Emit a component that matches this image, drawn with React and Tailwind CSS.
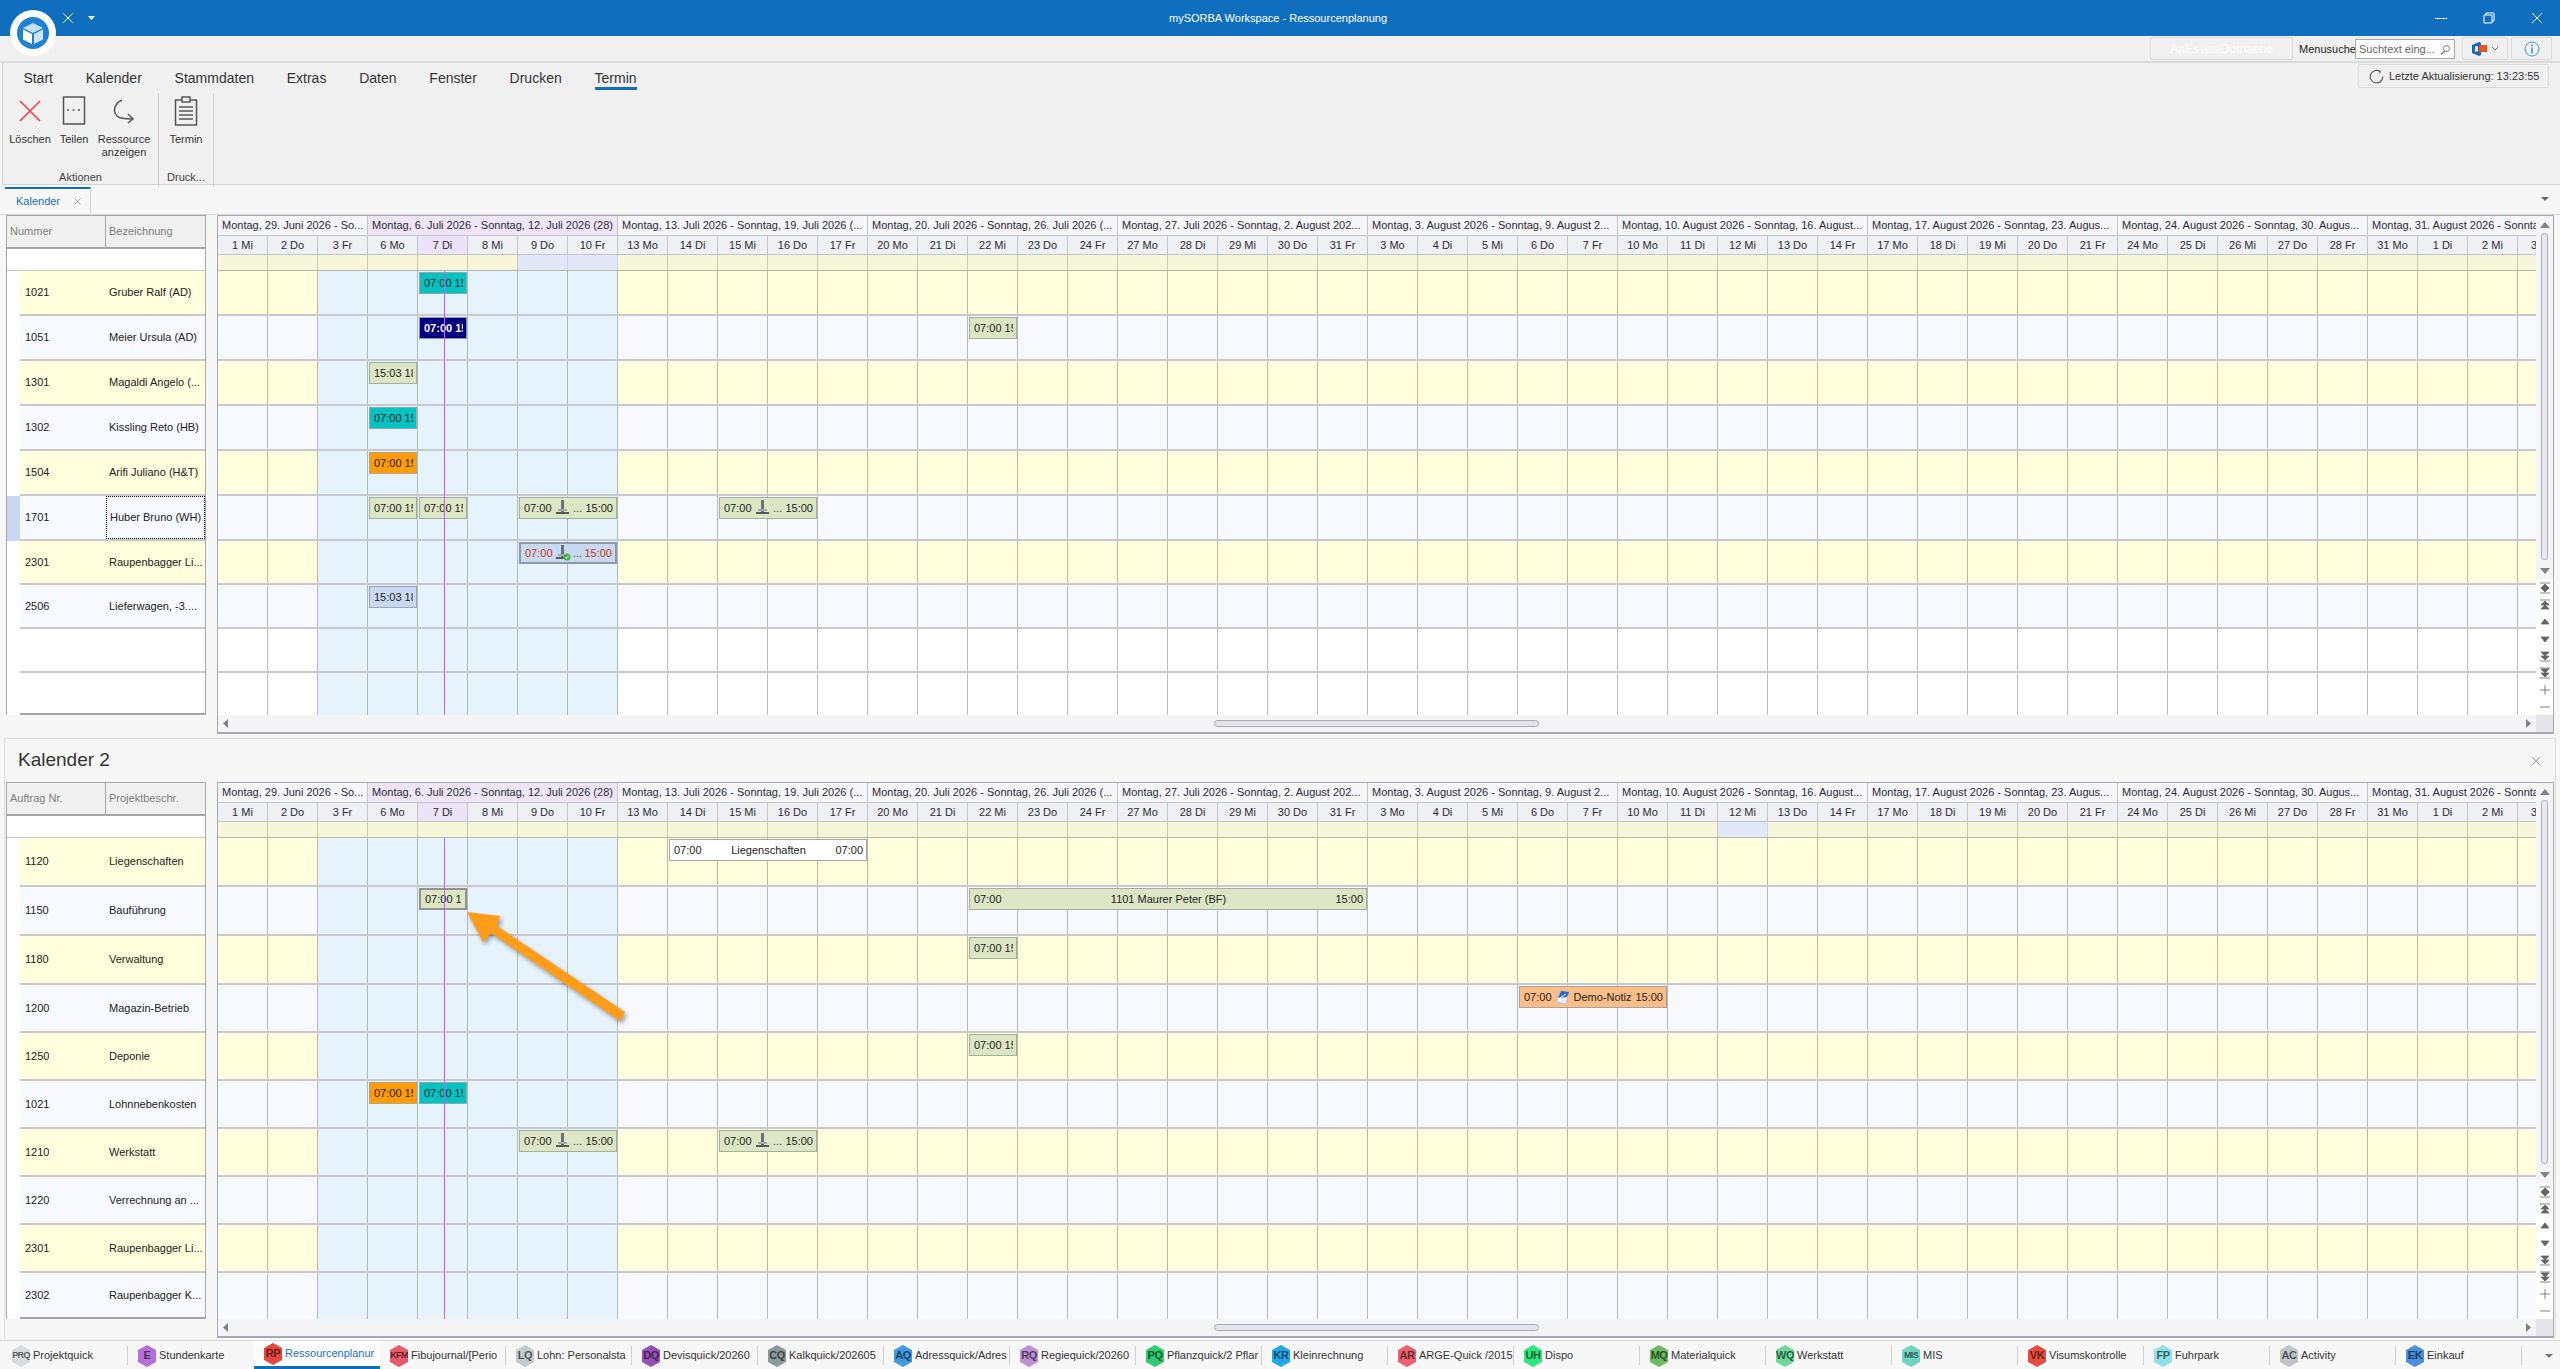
import React from 'react';

const days = ['1 Mi','2 Do','3 Fr','6 Mo','7 Di','8 Mi','9 Do','10 Fr','13 Mo','14 Di','15 Mi','16 Do','17 Fr','20 Mo','21 Di','22 Mi','23 Do','24 Fr','27 Mo','28 Di','29 Mi','30 Do','31 Fr','3 Mo','4 Di','5 Mi','6 Do','7 Fr','10 Mo','11 Di','12 Mi','13 Do','14 Fr','17 Mo','18 Di','19 Mi','20 Do','21 Fr','24 Mo','25 Di','26 Mi','27 Do','28 Fr','31 Mo','1 Di','2 Mi','3 Do'];

const weeks = [
  { n: 3, label: 'Montag, 29. Juni 2026 - So...' },
  { n: 5, label: 'Montag, 6. Juli 2026 - Sonntag, 12. Juli 2026 (28)', now: true },
  { n: 5, label: 'Montag, 13. Juli 2026 - Sonntag, 19. Juli 2026 (...' },
  { n: 5, label: 'Montag, 20. Juli 2026 - Sonntag, 26. Juli 2026 (...' },
  { n: 5, label: 'Montag, 27. Juli 2026 - Sonntag, 2. August 202...' },
  { n: 5, label: 'Montag, 3. August 2026 - Sonntag, 9. August 2...' },
  { n: 5, label: 'Montag, 10. August 2026 - Sonntag, 16. August...' },
  { n: 5, label: 'Montag, 17. August 2026 - Sonntag, 23. Augus...' },
  { n: 5, label: 'Montag, 24. August 2026 - Sonntag, 30. Augus...' },
  { n: 4, label: 'Montag, 31. August 2026 - Sonnta' },
];

const tabs = [
  ['PRQ', 'Projektquick', '#d9dde0'],
  ['E', 'Stundenkarte', '#b56fd8'],
  ['RP', 'Ressourcenplanur', '#e8453c'],
  ['KFM', 'Fibujournal/[Perio', '#e85a6a'],
  ['LQ', 'Lohn: Personalsta', '#c3cacd'],
  ['DQ', 'Devisquick/20260', '#9450b5'],
  ['CQ', 'Kalkquick/202605', '#8b9a9b'],
  ['AQ', 'Adressquick/Adres', '#3f9ade'],
  ['RQ', 'Regiequick/20260', '#bd8fd6'],
  ['PQ', 'Pflanzquick/2 Pflar', '#2ecc71'],
  ['KR', 'Kleinrechnung', '#1fa8ea'],
  ['AR', 'ARGE-Quick /2015', '#ec6070'],
  ['UH', 'Dispo', '#2ee67f'],
  ['MQ', 'Materialquick', '#6cbb5f'],
  ['WQ', 'Werkstatt', '#6dd99e'],
  ['MIS', 'MIS', '#6dd5c0'],
  ['VK', 'Visumskontrolle', '#e74c3c'],
  ['FP', 'Fuhrpark', '#90e0ea'],
  ['AC', 'Activity', '#c0c4c8'],
  ['EK', 'Einkauf', '#4a8fdc'],
];

const eventStyles = {
  green: 'bg-[#dce6c4] border border-[#a6ae9c] text-[#222]',
  greenSel: 'bg-[#dce6c4] border-2 border-[#8f958a] text-[#222]',
  teal: 'bg-[#00c4c4] border border-[#8fa8a8] text-[#222]',
  navy: 'bg-[#000080] border border-[#8f95b0] text-white font-bold',
  orange: 'bg-[#ff9c00] border border-[#b0a58f] text-[#222]',
  blue: 'bg-[#c9d9f1] border border-[#9aa6b8] text-[#222]',
  blueSel: 'bg-[#c9d9f1] border-2 border-[#8f99ac] text-[#c23a10]',
  white: 'bg-white border border-[#a8a8a8] text-[#222]',
  note: 'bg-[#fdbd86] border border-[#a8a29c] text-[#222]',
};

const topRows = [
  { h: 45, no: '1021', name: 'Gruber Ralf (AD)', tone: 'y', events: [{ col: 4, kind: 'teal', text: '07:00 15:00' }] },
  { h: 45, no: '1051', name: 'Meier Ursula (AD)', tone: 'w', events: [{ col: 4, kind: 'navy', text: '07:00 15:00' }, { col: 15, kind: 'green', text: '07:00 15:00' }] },
  { h: 45, no: '1301', name: 'Magaldi Angelo (...', tone: 'y', events: [{ col: 3, kind: 'green', text: '15:03 18:00' }] },
  { h: 45, no: '1302', name: 'Kissling Reto (HB)', tone: 'w', events: [{ col: 3, kind: 'teal', text: '07:00 15:00' }] },
  { h: 45, no: '1504', name: 'Arifi Juliano (H&T)', tone: 'y', events: [{ col: 3, kind: 'orange', text: '07:00 15:00' }] },
  { h: 45, no: '1701', name: 'Huber Bruno (WH)', tone: 'w', selected: true, events: [{ col: 3, kind: 'green', text: '07:00 15:00' }, { col: 4, kind: 'green', text: '07:00 15:00' }, { col: 6, span: 2, kind: 'green', tool: true }, { col: 10, span: 2, kind: 'green', tool: true }] },
  { h: 44, no: '2301', name: 'Raupenbagger Li...', tone: 'y', events: [{ col: 6, span: 2, kind: 'blueSel', tool: true, check: true }] },
  { h: 44, no: '2506', name: 'Lieferwagen, -3....', tone: 'w', events: [{ col: 3, kind: 'blue', text: '15:03 18:00' }] },
  { h: 44, no: '', name: '', tone: 'e', events: [] },
  { h: 42, no: '', name: '', tone: 'e', last: true, events: [] },
];

const bottomRows = [
  { h: 49, no: '1120', name: 'Liegenschaften', tone: 'y', events: [{ col: 9, span: 4, kind: 'white', left: '07:00', mid: 'Liegenschaften', right: '07:00' }] },
  { h: 49, no: '1150', name: 'Bauführung', tone: 'w', events: [{ col: 4, kind: 'greenSel', text: '07:00 15:00' }, { col: 15, span: 8, kind: 'green', left: '07:00', mid: '1101 Maurer Peter (BF)', right: '15:00' }] },
  { h: 49, no: '1180', name: 'Verwaltung', tone: 'y', events: [{ col: 15, kind: 'green', text: '07:00 15:00' }] },
  { h: 48, no: '1200', name: 'Magazin-Betrieb', tone: 'w', events: [{ col: 26, span: 3, kind: 'note', left: '07:00', note: true, mid: 'Demo-Notiz', right: '15:00' }] },
  { h: 48, no: '1250', name: 'Deponie', tone: 'y', events: [{ col: 15, kind: 'green', text: '07:00 15:00' }] },
  { h: 48, no: '1021', name: 'Lohnnebenkosten', tone: 'w', events: [{ col: 3, kind: 'orange', text: '07:00 15:00' }, { col: 4, kind: 'teal', text: '07:00 15:00' }] },
  { h: 48, no: '1210', name: 'Werkstatt', tone: 'y', events: [{ col: 6, span: 2, kind: 'green', tool: true }, { col: 10, span: 2, kind: 'green', tool: true }] },
  { h: 48, no: '1220', name: 'Verrechnung an ...', tone: 'w', events: [] },
  { h: 48, no: '2301', name: 'Raupenbagger Li...', tone: 'y', events: [] },
  { h: 46, no: '2302', name: 'Raupenbagger K...', tone: 'w', last: true, events: [] },
];

const ToolIcon = ({ check }) => (
  <svg width="16" height="16" viewBox="0 0 16 16" className="shrink-0">
    <rect x="6" y="0" width="3" height="12" fill="#6d7074" />
    <rect x="3" y="9" width="9" height="2" fill="#a5a8aa" />
    <rect x="1" y="12" width="13" height="2" fill="#55585c" />
    {check && <circle cx="12" cy="12" r="3.5" fill="#3fb54a" />}
    {check && <path d="M10.3 12l1.3 1.3 2.2-2.4" stroke="#fff" strokeWidth="1" fill="none" />}
  </svg>
);

const NoteIcon = () => (
  <svg width="15" height="16" viewBox="0 0 15 16" className="shrink-0">
    <path d="M1 13L5 2l9 1-3 12z" fill="#e6eef7" stroke="#9fb2c9" strokeWidth="0.6" />
    <path d="M3 9l3-7 8 1-2 5z" fill="#2268c8" />
    <path d="M3 10l8-5" stroke="#fff" strokeWidth="1" />
  </svg>
);

const Event = ({ ev }) => {
  const span = ev.span || 1;
  return (
    <div
      className={`absolute top-px h-[22px] z-10 overflow-hidden flex items-center pl-[4px] pr-[3px] whitespace-nowrap ${eventStyles[ev.kind]}`}
      style={{ left: ev.col * 50 + 1, width: span * 50 - 2 }}
    >
      {ev.text && <span className="overflow-hidden">{ev.text}</span>}
      {ev.tool && (
        <div className="flex w-full items-center justify-between">
          <span>07:00</span>
          <span className="flex items-center gap-[2px] text-[#444]"><ToolIcon check={ev.check} />...</span>
          <span>15:00</span>
        </div>
      )}
      {ev.mid && (
        <div className="flex w-full items-center justify-between">
          <span>{ev.left}</span>
          <span className="flex items-center gap-[3px]">{ev.note && <NoteIcon />}{ev.mid}</span>
          <span>{ev.right}</span>
        </div>
      )}
    </div>
  );
};

const cellClass = (tone, i) => {
  const inBlue = i >= 2 && i <= 7;
  if (inBlue) return 'bg-[#e6f3fc] border-[#b0bab2]';
  if (tone === 'y') return 'bg-[#ffffde] border-[#b9b99f]';
  if (tone === 'w') return 'bg-[#f7f9ff] border-[#b6b6be]';
  return 'bg-white border-[#bcbcbc]';
};

const LeftPanel = ({ heads, headH, blankH, rows }) => (
  <div className="w-[200px] shrink-0 self-start border-x border-[#a6a6a6] bg-white text-[#222]">
    <div className="flex border-y-2 border-t border-[#a6a6a6] bg-[#f0f0f0] text-[#7d7d7d]" style={{ height: headH }}>
      <div className="w-[99px] border-r border-[#a6a6a6] pl-[3px] flex items-center">{heads[0]}</div>
      <div className="flex-1 pl-[3px] flex items-center">{heads[1]}</div>
    </div>
    <div className="border-b border-[#c8c8c8]" style={{ height: blankH }} />
    {rows.map((r, i) => {
      const bg = r.tone === 'y' ? 'bg-[#ffffde]' : r.tone === 'w' ? 'bg-[#f7f9ff]' : 'bg-white';
      return (
        <div key={i} className="flex" style={{ height: r.h }}>
          <div className={`w-[13px] shrink-0 ${r.selected ? 'bg-[#c9d8f5]' : 'bg-white'}`} />
          <div className={`flex-1 flex min-w-0 ${r.last ? 'border-b-2 border-[#a6a6a6]' : 'border-b-2 border-[#c8c8cc]'} ${bg}`}>
            <div className="w-[86px] shrink-0 pl-[5px] flex items-center">{r.no}</div>
            <div className={`flex-1 pl-[3px] flex items-center min-w-0 whitespace-nowrap ${r.selected ? 'border border-dotted border-black' : ''}`}>{r.name}</div>
          </div>
        </div>
      );
    })}
  </div>
);

const NavGlyph = ({ d }) => (
  <svg width="12" height="12" viewBox="0 0 12 12"><path d={d} fill="#62646b" stroke="#62646b" strokeWidth="0.8" /></svg>
);

const navIcons = [
  'M1 1h10M1 11h10M6 2L2 6h8zM6 10L2 6h8z',
  'M1 1h10M6 2L2 6h8zM6 6L2 10h8z',
  'M6 3L2 8h8z',
  'M6 9L2 4h8z',
  'M6 6L2 2h8zM6 10L2 6h8zM1 11h10',
  'M1 1h10M1 11h10M6 6L2 2h8zM6 10L2 6h8z',
  'M6 1v10M1 6h10',
  'M1 6h10',
];

const VScroll = ({ thumbH }) => (
  <div className="w-[17px] shrink-0 flex flex-col items-center bg-[#f4f4f6]">
    <div className="h-[17px] flex items-center justify-center">
      <svg width="10" height="6" viewBox="0 0 10 6"><path d="M5 0L0 6h10z" fill="#7f8188" /></svg>
    </div>
    <div className="w-[7px] border border-[#a9a9b3] rounded-[4px] bg-[#e9e9ee]" style={{ height: thumbH }} />
    <div className="h-[17px] mt-[2px] flex items-center justify-center">
      <svg width="10" height="6" viewBox="0 0 10 6"><path d="M5 6L0 0h10z" fill="#7f8188" /></svg>
    </div>
    <div className="flex-1 w-full bg-white flex flex-col items-center justify-end">
      {navIcons.map((d, i) => (
        <div key={i} className="h-[17px] flex items-center justify-center"><NavGlyph d={d} /></div>
      ))}
    </div>
    <div className="h-[17px] w-full bg-[#e6e6ea]" />
  </div>
);

const Grid = ({ weekH, rows, extraBlue, thumbH, nowDayCol }) => (
  <div className="relative flex-1 min-w-0 flex border-l border-b-2 border-t border-[#a8a8b2] border-r border-r-[#a8a8b2]">
    <div className="flex-1 min-w-0 flex flex-col overflow-hidden">
      <div className="flex whitespace-nowrap bg-[#f6f6f8] text-[#2a2a38]" style={{ height: weekH }}>
        {weeks.map((w, i) => (
          <div
            key={i}
            className={`shrink-0 border-r border-b border-[#c4c5cc] pl-[4px] flex items-center ${w.now ? 'bg-[#eee6f8]' : ''}`}
            style={{ width: w.n * 50 }}
          >
            {w.label}
          </div>
        ))}
      </div>
      <div className="flex h-[19px] text-[#2a2a38]">
        {days.map((d, i) => (
          <div key={i} className={`w-[50px] shrink-0 border-r border-b border-[#c4c5cc] flex items-center justify-center ${i === nowDayCol ? 'bg-[#ebe3f7]' : 'bg-[#eff0f3]'}`}>{d}</div>
        ))}
      </div>
      <div className="flex h-[16px] border-b border-[#b9b9a8]">
        {days.map((d, i) => (
          <div key={i} className={`w-[50px] shrink-0 border-r ${extraBlue.includes(i) ? 'bg-[#e1e8fa] border-[#d0d4e0]' : 'bg-[#f5f6da] border-[#c9c9b2]'}`} />
        ))}
      </div>
      <div className="relative flex-1">
        {rows.map((r, ri) => (
          <div key={ri} className={`relative flex ${r.last ? '' : 'border-b-2 border-[#c8c8d0]'}`} style={{ height: r.h }}>
            {days.map((d, i) => (
              <div key={i} className={`w-[50px] shrink-0 border-r ${cellClass(r.tone, i)}`} />
            ))}
            {r.events.map((ev, ei) => <Event key={ei} ev={ev} />)}
          </div>
        ))}
        <div className="absolute top-0 bottom-0 left-[226px] w-px bg-[#c262f4] z-20" />
      </div>
      <div className="relative h-[17px] shrink-0 bg-[#f4f4f6] flex items-center justify-between px-[5px]">
        <svg width="5" height="9" viewBox="0 0 5 9"><path d="M0 4.5L5 0v9z" fill="#7f8188" /></svg>
        <div className="absolute left-[996px] top-[5px] w-[325px] h-[7px] border border-[#a9a9b3] rounded-[4px] bg-[#e4e4ea]" />
        <svg width="5" height="9" viewBox="0 0 5 9"><path d="M5 4.5L0 0v9z" fill="#7f8188" /></svg>
      </div>
    </div>
    <VScroll thumbH={thumbH} />
  </div>
);

const Hex = ({ code, color }) => (
  <span className="relative w-[18px] h-[22px] shrink-0 flex items-center justify-center">
    <svg width="18" height="22" viewBox="0 0 18 22" className="absolute inset-0">
      <polygon points="9,0 18,5 18,17 9,22 0,17 0,5" fill={color} />
    </svg>
    <span className={`relative font-bold text-black/60 ${code.length > 2 ? 'text-[9px] tracking-[-0.7px]' : 'text-[11px] tracking-[-0.5px]'}`}>{code}</span>
  </span>
);

const ClosedX = ({ size = 12, color = '#808080', w = 1 }) => (
  <svg width={size} height={size} viewBox="0 0 12 12"><path d="M1 1l10 10M11 1L1 11" stroke={color} strokeWidth={w} fill="none" /></svg>
);

const RibbonButton = ({ w, icon, label, label2 }) => (
  <div className="flex flex-col items-center" style={{ width: w }}>
    <div className="h-[36px] flex items-center justify-center">{icon}</div>
    <div className="mt-[4px] leading-[13px] text-center text-[#333] whitespace-nowrap">{label}{label2 && <br />}{label2}</div>
  </div>
);

export default function App() {
  const ribbonTabs = ['Start', 'Kalender', 'Stammdaten', 'Extras', 'Daten', 'Fenster', 'Drucken', 'Termin'];

  return (
    <div className="relative w-[2560px] h-[1369px] overflow-hidden flex flex-col bg-[#f7f7f7] text-[11px] text-[#222] font-['Liberation_Sans',Arial,sans-serif]">
      {/* title bar */}
      <div className="h-9 shrink-0 bg-[#106ebe] flex items-center text-white relative">
        <div className="ml-[62px]"><ClosedX size={12} color="#ffffff" w={1} /></div>
        <svg className="ml-[14px]" width="7" height="4" viewBox="0 0 7 4"><path d="M0 0h7L3.5 4z" fill="#fff" /></svg>
        <div className="flex-1 text-center text-[11px] pl-[26px]">mySORBA Workspace - Ressourcenplanung</div>
        <div className="flex items-center gap-[36px] mr-[17px]">
          <div className="w-[12px] h-px bg-white" />
          <svg width="12" height="12" viewBox="0 0 12 12"><path d="M3 3V1h8v8H9M1 3h8v8H1z" stroke="#fff" fill="none" /></svg>
          <ClosedX size={12} color="#ffffff" />
        </div>
      </div>

      {/* logo */}
      <div className="absolute left-[10px] top-[10px] w-[46px] h-[46px] rounded-full bg-white flex items-center justify-center z-30">
        <svg width="32" height="32" viewBox="0 0 32 32">
          <circle cx="16" cy="16" r="16" fill="#1f80d4" />
          <path d="M16 6l10 5-10 5-10-5z" fill="#fff" opacity="0.75" />
          <path d="M6 12.5l9 4.5v10l-9-4.5z" fill="#fff" />
          <path d="M26 12.5l-9 4.5v10l9-4.5z" fill="#cfe5f8" />
        </svg>
      </div>

      {/* quick search strip */}
      <div className="h-[27px] shrink-0 bg-[#f0f0f0] border-b-2 border-[#dcdcdc] flex items-start justify-end pt-px pr-[8px]">
        <div className="w-[143px] h-[23px] border border-[#dadada] rounded-[2px] flex items-center justify-center text-white text-[12px]">AaEsTestDomaene</div>
        <div className="ml-[6px] mt-[4px] w-[56px] whitespace-nowrap">Menusuche</div>
        <div className="w-[100px] h-[20px] mt-[2px] border border-[#a9a9a9] bg-white flex items-center justify-between px-[3px] text-[#666] whitespace-nowrap">
          <span>Suchtext eing...</span>
          <svg width="11" height="11" viewBox="0 0 11 11"><circle cx="6.5" cy="4.5" r="3" stroke="#777" fill="none" /><path d="M4.5 7L1 10.5" stroke="#777" strokeWidth="1.4" /></svg>
        </div>
        <div className="ml-[7px] w-[46px] h-[23px] border border-[#dadada] rounded-[2px] flex items-center justify-center gap-[2px]">
          <svg width="18" height="16" viewBox="0 0 18 16"><path d="M1 4l7-3 2 1v12l-2 1-7-3z" fill="#1668bd" /><rect x="8" y="4" width="8" height="7" fill="#e8551f" /><rect x="4" y="5.5" width="3" height="5" fill="#fff" /></svg>
          <svg width="8" height="5" viewBox="0 0 8 5"><path d="M1 1l3 3 3-3" stroke="#666" fill="none" /></svg>
        </div>
        <div className="ml-[3px] w-[41px] h-[23px] border border-[#dadada] rounded-[2px] flex items-center justify-center">
          <svg width="16" height="16" viewBox="0 0 16 16"><circle cx="8" cy="8" r="7" stroke="#3a96dd" fill="none" /><circle cx="8" cy="4.5" r="1" fill="#3a96dd" /><rect x="7.2" y="6.5" width="1.6" height="6" fill="#3a96dd" /></svg>
        </div>
      </div>

      {/* ribbon */}
      <div className="relative h-[122px] shrink-0 bg-[#f0f0f0] border-b border-[#d4d4d4] ml-[2px] border-l border-l-[#d4d4d4]">
        <div className="flex pl-[4px] pt-[2px] text-[14px] text-[#333]">
          {ribbonTabs.map((t) => (
            <div key={t} className="px-[16.4px] h-[25px] flex items-center">
              <span className={`leading-[20px] ${t === 'Termin' ? 'border-b-[3px] border-[#106ebe] h-[25px] pt-[3px]' : ''}`}>{t}</span>
            </div>
          ))}
        </div>
        <div className="flex mt-[3px] h-[94px]">
          <div className="w-[156px] border-r border-[#d0d0d0] flex flex-col">
            <div className="flex flex-1 pl-[5px]">
              <RibbonButton w={44} label="Löschen" icon={<svg width="22" height="22" viewBox="0 0 22 22"><path d="M1 1l20 20M21 1L1 21" stroke="#ee4646" strokeWidth="1.7" fill="none" /></svg>} />
              <RibbonButton w={44} label="Teilen" icon={<svg width="24" height="30" viewBox="0 0 24 30"><rect x="1.5" y="1" width="21" height="27" fill="none" stroke="#555" strokeWidth="1.5" /><path d="M5 14h2M10.5 14h2M16 14h2" stroke="#555" strokeWidth="1.5" /></svg>} />
              <RibbonButton w={56} label="Ressource" label2="anzeigen" icon={<svg width="24" height="26" viewBox="0 0 24 26"><path d="M10 2C3 5 0 13 5 18c2 2 6 3 15 3" fill="none" stroke="#555" strokeWidth="1.5" /><path d="M16 16l5 5-5 4" fill="none" stroke="#555" strokeWidth="1.5" /></svg>} />
            </div>
            <div className="h-[18px] text-center text-[#444]">Aktionen</div>
          </div>
          <div className="w-[55px] border-r border-[#d0d0d0] flex flex-col">
            <div className="flex flex-1 justify-center">
              <RibbonButton w={50} label="Termin" icon={<svg width="24" height="30" viewBox="0 0 24 30"><rect x="1.5" y="4" width="21" height="25" fill="none" stroke="#555" strokeWidth="1.5" /><rect x="8" y="1" width="8" height="5" fill="#f0f0f0" stroke="#555" strokeWidth="1.5" /><path d="M5 11h14M5 15h14M5 19h14M5 23h14" stroke="#555" strokeWidth="1.5" /></svg>} />
            </div>
            <div className="h-[18px] text-center text-[#444]">Druck...</div>
          </div>
        </div>
        <div className="absolute right-[11px] top-[1px] w-[191px] h-[24px] border border-[#dadada] rounded-[2px] flex items-center text-[#333] pl-[10px] gap-[5px] whitespace-nowrap">
          <svg width="15" height="15" viewBox="0 0 15 15"><path d="M11 2.5A6.3 6.3 0 1 0 13.8 7.5" fill="none" stroke="#555" strokeWidth="1.1" /><path d="M9.5 1.5l2 1-1 2" fill="none" stroke="#555" /></svg>
          Letzte Aktualisierung: 13:23:55
        </div>
      </div>

      {/* document tab strip */}
      <div className="h-[29px] shrink-0 flex items-start pl-[5px] relative">
        <div className="w-[86px] h-[27px] mt-[2px] border-t-2 border-t-[#106ebe] border-r border-[#d4d4d4] bg-[#f7f7f7] flex items-center pl-[11px] gap-[14px] text-[#1a6fc0]">
          Kalender <ClosedX size={7} color="#777" />
        </div>
        <svg className="absolute right-[11px] top-[12px]" width="8" height="4" viewBox="0 0 8 4"><path d="M0 0h8L4 4z" fill="#666" /></svg>
      </div>

      {/* Kalender 1 */}
      <div className="h-[520px] shrink-0 flex pl-[6px] pr-[6px] border-t border-[#d4d4d4]">
        <LeftPanel heads={['Nummer', 'Bezeichnung']} headH={34} blankH={22} rows={topRows} />
        <div className="w-[11px] shrink-0" />
        <Grid weekH={20} rows={topRows} extraBlue={[6, 7]} thumbH={327} nowDayCol={4} />
      </div>

      {/* Kalender 2 */}
      <div className="mt-[4px] mx-[4px] h-[600px] shrink-0 border-t border-x border-[#dcdcdc] flex flex-col">
        <div className="h-[43px] shrink-0 flex items-center justify-between pl-[13px] pr-[14px] text-[19px] text-[#333]">
          Kalender 2
          <ClosedX size={10} color="#888" />
        </div>
        <div className="flex-1 flex pl-[1px] pr-[1px]">
          <LeftPanel heads={['Auftrag Nr.', 'Projektbeschr.']} headH={34} blankH={22} rows={bottomRows} />
          <div className="w-[11px] shrink-0" />
          <Grid weekH={20} rows={bottomRows} extraBlue={[30]} thumbH={364} nowDayCol={4} />
        </div>
      </div>

      {/* task tabs */}
      <div className="flex-1 mt-[2px] flex items-start pl-[2px] border-t border-[#d8d8d8] relative text-[#333]">
        {tabs.map(([code, label, color], i) => (
          <div key={code} className={`relative w-[126px] h-[29px] shrink-0 flex items-center pl-[10px] gap-[3px] ${i === 2 ? 'border-b-4 border-[#106ebe] bg-white text-[#1a6fc0]' : ''}`}>
            <Hex code={code} color={color} />
            <span className="whitespace-nowrap">{label}</span>
            {i !== 2 && i !== 1 && <div className="absolute right-0 top-[5px] h-[19px] w-px bg-[#cfcfcf]" />}
          </div>
        ))}
        <svg className="absolute right-[7px] top-[13px]" width="8" height="4" viewBox="0 0 8 4"><path d="M0 0h8L4 4z" fill="#777" /></svg>
      </div>

      {/* annotation arrow */}
      <svg className="absolute left-0 top-0 z-40 pointer-events-none drop-shadow-[2px_3px_2px_rgba(0,0,0,0.35)]" width="2560" height="1369" viewBox="0 0 2560 1369">
        <polygon points="467,912 500,916 497,926 625,1012 620,1021 491,933 483,942" fill="#ff9c1a" />
      </svg>
    </div>
  );
}
